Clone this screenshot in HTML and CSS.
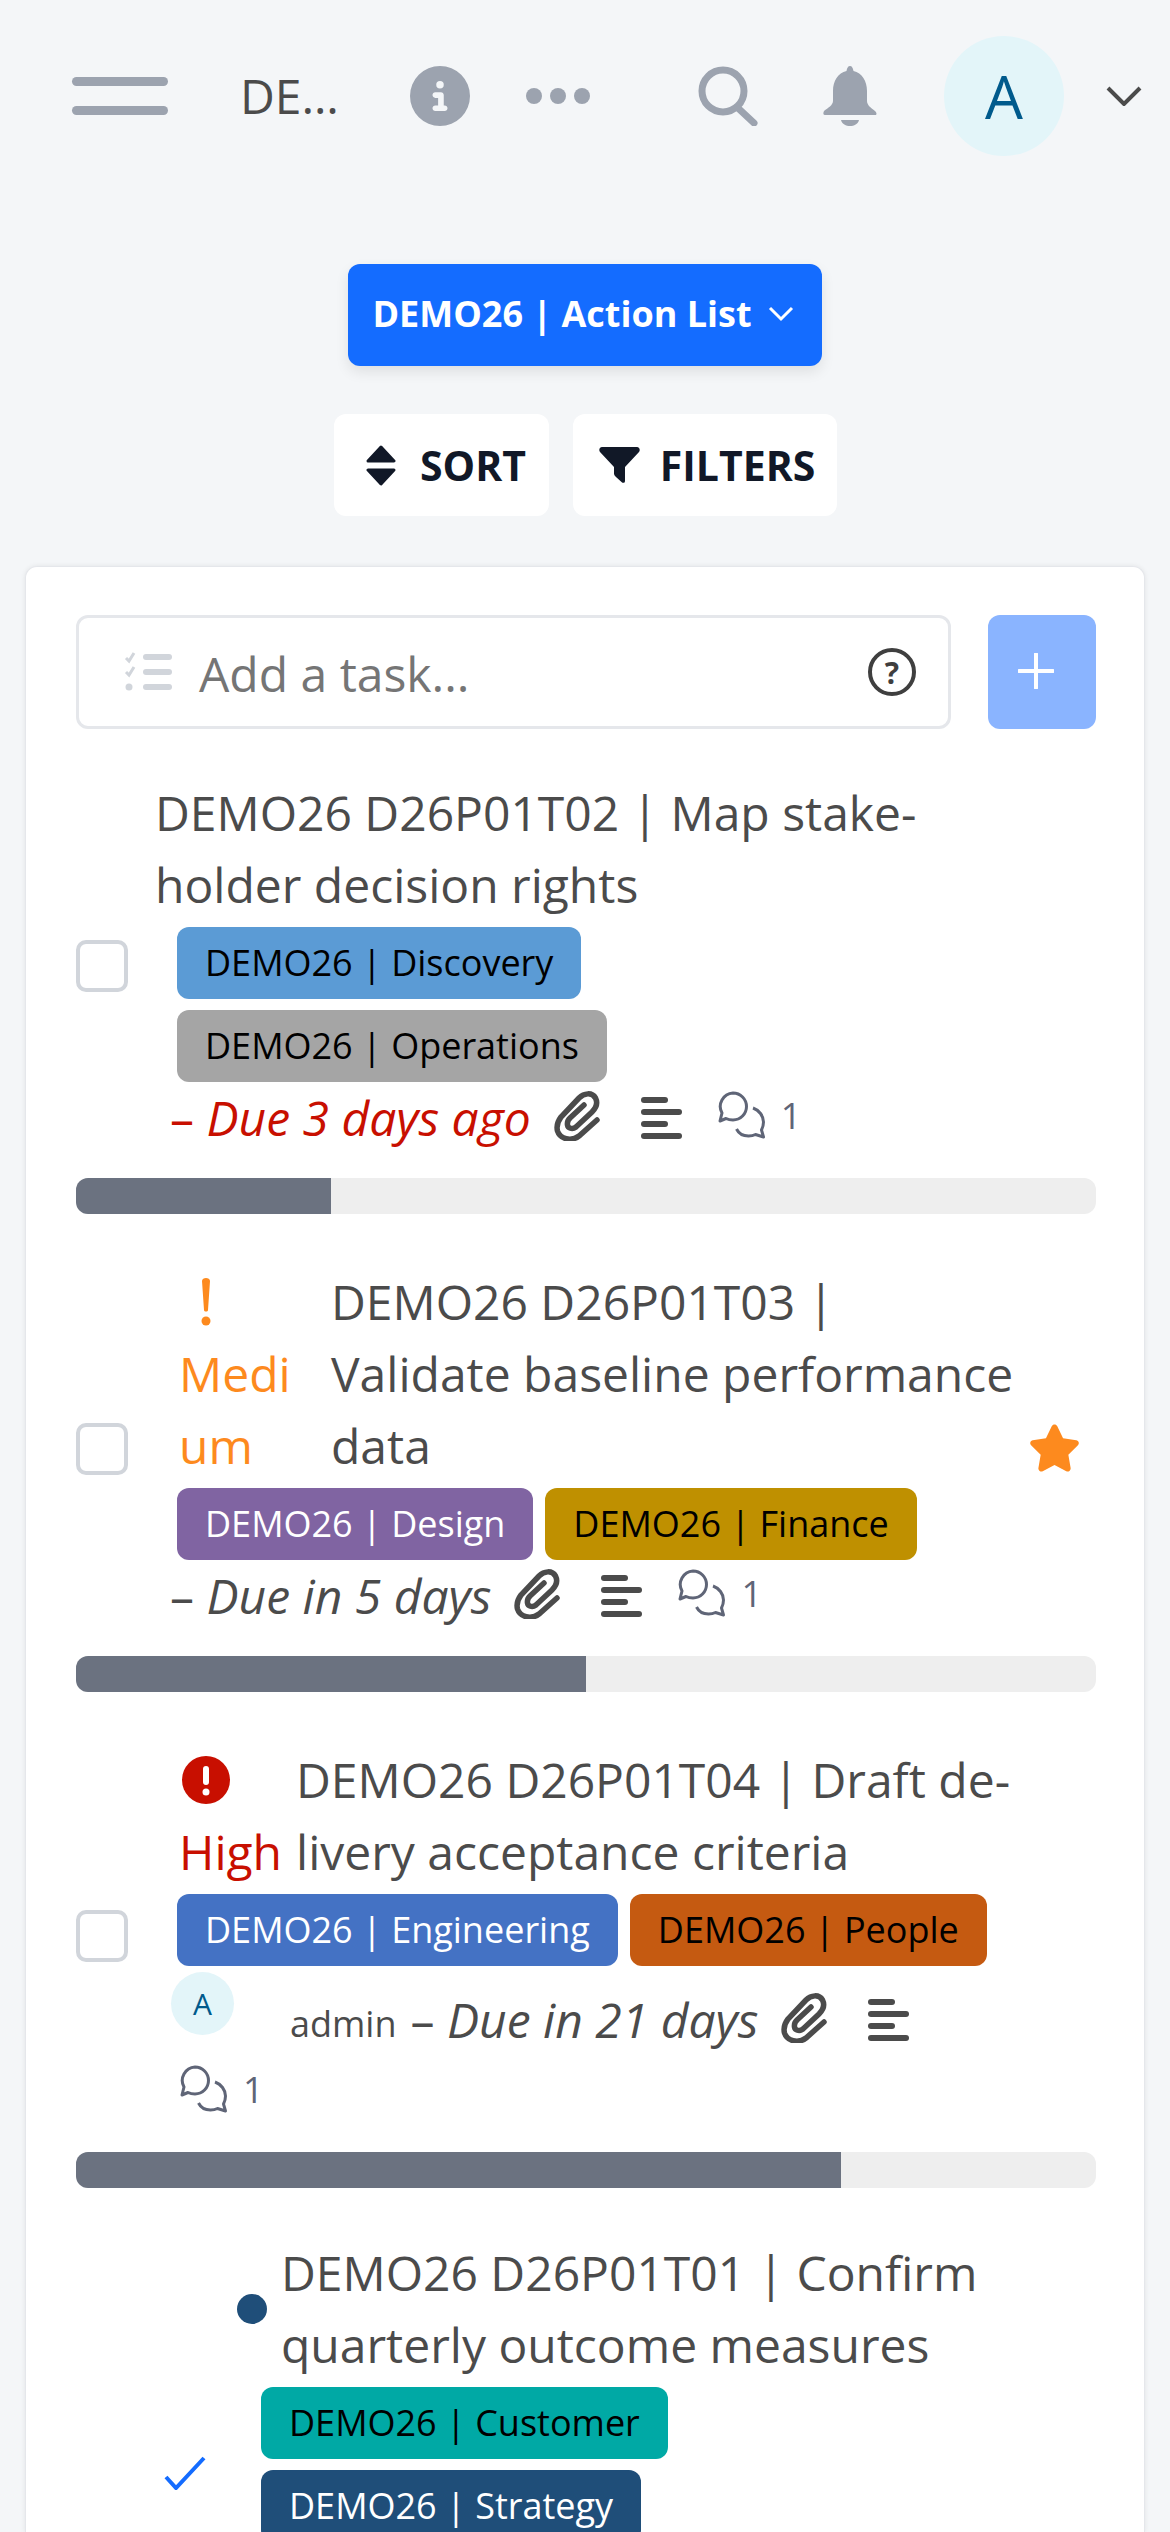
FILE: index.html
```html
<!DOCTYPE html>
<html lang="en">
<head>
    <meta charset="UTF-8">
    <meta name="viewport" content="width=device-width, initial-scale=1.0">
    <title>DEMO26 | Action List</title>
    <link rel="stylesheet" href="styles.css">
</head>
<body>
    <svg class="icon-defs" width="0" height="0">
        <defs>
            <symbol id="clip" viewBox="0 0 46 51">
                <path d="M43 30L25 46C17 52 6 49 3.5 41C2 35 4 31 7 27L25 8C30 3 38 2 41.5 8C44 13 42 18 38 22L22 37C18 40 14 38 13.5 35C13 32 14 30 16 28L30 15" fill="none" stroke="#4b4b4b" stroke-width="5.5" stroke-linecap="round"/>
            </symbol>
            <symbol id="lines" viewBox="0 0 41 42">
                <rect x="0" y="0" width="27" height="6" rx="3"/>
                <rect x="0" y="12" width="41" height="6" rx="3"/>
                <rect x="0" y="24" width="27" height="6" rx="3"/>
                <rect x="0" y="36" width="41" height="6" rx="3"/>
            </symbol>
            <symbol id="comments" viewBox="0 0 48 48">
                <path d="M15 2a13.5 13.5 0 0 1 0 27c-3 0-5-.5-7-1.5L2 30l2-8A13.5 13.5 0 0 1 15 2z" fill="none" stroke="#5f6577" stroke-width="3" stroke-linejoin="round"/>
                <path d="M35 17c6 2 10.5 8 10.5 14 0 3-1 6-2 8l2 7-8-2.5c-2 1-4 1.5-7 1.5-6 0-10-3-12-7" fill="none" stroke="#5f6577" stroke-width="3" stroke-linejoin="round"/>
            </symbol>
        </defs>
    </svg>

    <header class="topbar">
        <div class="hamburger"><span></span><span></span></div>
        <div class="topbar-title">DEMO26 | Action List</div>
        <svg class="icon-info" viewBox="0 0 512 512"><path d="M256 512A256 256 0 1 0 256 0a256 256 0 1 0 0 512zM216 336h24V272H216c-13.3 0-24-10.7-24-24s10.7-24 24-24h48c13.3 0 24 10.7 24 24v88h8c13.3 0 24 10.7 24 24s-10.7 24-24 24H216c-13.3 0-24-10.7-24-24s10.7-24 24-24zm40-208a32 32 0 1 1 0 64 32 32 0 1 1 0-64z"/></svg>
        <div class="dots"><span></span><span></span><span></span></div>
        <svg class="icon-search" viewBox="0 0 60 60"><circle cx="25" cy="25" r="21" fill="none" stroke="#9ca3af" stroke-width="7"/><path d="M41 43L56 57" stroke="#9ca3af" stroke-width="7" stroke-linecap="round"/></svg>
        <svg class="icon-bell" viewBox="0 0 54 60"><path d="M27 0c2 0 3 2 3.5 5C39 7 44 15 44 25v10c0 4 4 7 8 10 2 2 2 4 0 4H2c-2 0-2-2-1-4 4-3 9-6 9-10V25C10 15 15 7 23.5 5 24 2 25 0 27 0z"/><path d="M18 54h18c-1 4-5 6-9 6s-8-2-9-6z"/></svg>
        <div class="avatar">A</div>
        <svg class="icon-chevron" viewBox="0 0 36 20"><path d="M2 2L18 18L34 2" fill="none" stroke="#4b4b4b" stroke-width="4"/></svg>
    </header>

    <div class="list-picker">
        <button class="list-btn">DEMO26 | Action List
            <svg viewBox="0 0 26 16"><path d="M2 2L13 13L24 2" fill="none" stroke="#fff" stroke-width="3"/></svg>
        </button>
    </div>

    <div class="toolbar">
        <button class="tool-btn sort-btn">
            <svg class="icon-sort" viewBox="0 0 30 41"><path d="M15 2L28 16H2z" stroke="#111827" stroke-width="3" stroke-linejoin="round"/><path d="M2 25H28L15 39z" stroke="#111827" stroke-width="3" stroke-linejoin="round"/></svg>
            SORT
        </button>
        <button class="tool-btn filter-btn">
            <svg class="icon-filter" viewBox="0 0 41 36"><path d="M3 0h35c2.500 0 3.500 3 2 5L26 20v14c0 2-2 2.500-3.500 1L17 30c-1-1-2-2-2-3.500V20L1 5C-.5 3 .5 0 3 0z"/></svg>
            FILTERS
        </button>
    </div>

    <main class="card">
        <div class="add-row">
            <div class="add-input">
                <svg class="icon-tasks" viewBox="0 0 50 40">
                    <path d="M3 6l3 3 5-8M3 20l3 3 5-8" fill="none" stroke="#d1d5db" stroke-width="3"/>
                    <circle cx="6" cy="35" r="3.500" fill="#d1d5db"/>
                    <rect x="20" y="2" width="29" height="6" rx="3" fill="#d1d5db"/>
                    <rect x="20" y="17" width="29" height="6" rx="3" fill="#d1d5db"/>
                    <rect x="20" y="32" width="29" height="6" rx="3" fill="#d1d5db"/>
                </svg>
                <span class="add-placeholder">Add a task...</span>
                <span class="help">?</span>
            </div>
            <button class="add-btn"><svg viewBox="0 0 36 36"><path d="M18 1V35M1 18H35" stroke="#fff" stroke-width="4" stroke-linecap="round"/></svg></button>
        </div>

        <!-- task 1 -->
        <div class="task">
            <div class="checkbox"></div>
            <div class="task-body">
                <div class="task-head">
                    <div class="task-title">DEMO26 D26P01T02 | Map stake&shy;holder decision rights</div>
                </div>
                <div class="tags">
                    <span class="tag tag-discovery">DEMO26 | Discovery</span>
                    <span class="tag tag-operations">DEMO26 | Operations</span>
                </div>
                <div class="meta">
                    <span class="due overdue">– <em>Due 3 days ago</em></span>
                    <svg class="icon-clip"><use href="#clip"/></svg>
                    <svg class="icon-lines"><use href="#lines"/></svg>
                    <span class="comment-count"><svg class="icon-comments"><use href="#comments"/></svg>1</span>
                </div>
            </div>
            <div class="star-slot"></div>
        </div>
        <div class="progress"><div class="progress-fill" style="width: 25%"></div></div>

        <!-- task 2 -->
        <div class="task">
            <div class="checkbox"></div>
            <div class="task-body">
                <div class="task-head">
                    <div class="priority priority-medium">
                        <div class="priority-icon">
                            <svg class="icon-bang" viewBox="0 0 10 48"><path d="M1 3c0-4 8-4 8 0L7 32c0 2-4 2-4 0z"/><circle cx="5" cy="43" r="4.500"/></svg>
                        </div>
                        Medium
                    </div>
                    <div class="task-title">DEMO26 D26P01T03 | Validate baseline performance data</div>
                </div>
                <div class="tags">
                    <span class="tag tag-design">DEMO26 | Design</span>
                    <span class="tag tag-finance">DEMO26 | Finance</span>
                </div>
                <div class="meta">
                    <span class="due">– <em>Due in 5 days</em></span>
                    <svg class="icon-clip"><use href="#clip"/></svg>
                    <svg class="icon-lines"><use href="#lines"/></svg>
                    <span class="comment-count"><svg class="icon-comments"><use href="#comments"/></svg>1</span>
                </div>
            </div>
            <div class="star-slot">
                <svg class="icon-star" viewBox="0 0 576 512"><path d="M316.900 18C311.600 7 300.400 0 288.100 0s-23.400 7-28.800 18L195 150.300 51.400 171.500c-12 1.800-22 10.200-25.700 21.700s-.7 24.200 7.900 32.700L137.800 329 113.200 474.700c-2 12 3 24.200 12.900 31.300s23 8 33.800 2.300l128.300-68.500 128.300 68.500c10.800 5.700 23.900 4.900 33.800-2.300s14.900-19.300 12.900-31.300L438.500 329 542.700 225.900c8.600-8.500 11.700-21.200 7.900-32.700s-13.700-19.900-25.700-21.700L381.200 150.300 316.900 18z"/></svg>
            </div>
        </div>
        <div class="progress"><div class="progress-fill" style="width: 50%"></div></div>

        <!-- task 3 -->
        <div class="task">
            <div class="checkbox"></div>
            <div class="task-body">
                <div class="task-head">
                    <div class="priority priority-high">
                        <div class="priority-icon">
                            <svg class="icon-alert" viewBox="0 0 48 48"><circle cx="24" cy="24" r="24"/><rect x="21" y="10" width="6" height="19" rx="3" fill="#fff"/><circle cx="24" cy="36" r="3.500" fill="#fff"/></svg>
                        </div>
                        High
                    </div>
                    <div class="task-title">DEMO26 D26P01T04 | Draft de&shy;livery acceptance criteria</div>
                </div>
                <div class="tags">
                    <span class="tag tag-engineering">DEMO26 | Engineering</span>
                    <span class="tag tag-people">DEMO26 | People</span>
                </div>
                <div class="meta">
                    <span class="avatar avatar-small">A</span>
                    <span class="assignee">admin</span>
                    <span class="due">– <em>Due in 21 days</em></span>
                    <svg class="icon-clip"><use href="#clip"/></svg>
                    <svg class="icon-lines"><use href="#lines"/></svg>
                    <span class="comment-count"><svg class="icon-comments"><use href="#comments"/></svg>1</span>
                </div>
            </div>
            <div class="star-slot"></div>
        </div>
        <div class="progress"><div class="progress-fill" style="width: 75%"></div></div>

        <!-- task 4, done -->
        <div class="task task-done">
            <svg class="icon-check" viewBox="0 0 42 34"><path d="M2 21L12 32L40 2" fill="none" stroke="#146cff" stroke-width="4"/></svg>
            <div class="task-body">
                <div class="task-head">
                    <span class="status-dot"></span>
                    <div class="task-title">DEMO26 D26P01T01 | Confirm quarterly outcome measures</div>
                </div>
                <div class="tags">
                    <span class="tag tag-customer">DEMO26 | Customer</span>
                    <span class="tag tag-strategy">DEMO26 | Strategy</span>
                </div>
            </div>
            <div class="star-slot"></div>
        </div>
    </main>
</body>
</html>
```

FILE: styles.css
```css
html, body {
    height: 2532px;
    overflow: hidden;
}

body {
    margin: 0;
    background-color: #f4f6f8;
    font-family: "Open Sans", "Noto Sans", sans-serif;
    color: #4b4b4b;
}

button {
    font-family: inherit;
    border: none;
    cursor: pointer;
}

.icon-defs {
    position: absolute;
}

/* top bar */
.topbar {
    display: flex;
    align-items: center;
    height: 121px;
    padding: 35px 0 0 72px;
}

.hamburger {
    width: 96px;
    margin-right: 72px;
}

.hamburger span {
    display: block;
    height: 9px;
    border-radius: 5px;
    background-color: #9ca3af;
}

.hamburger span + span {
    margin-top: 20px;
}

.topbar-title {
    width: 99px;
    margin-right: 71px;
    font-size: 48px;
    white-space: nowrap;
    overflow: hidden;
    text-overflow: ellipsis;
}

.icon-info {
    width: 60px;
    height: 60px;
    margin-right: 56px;
    fill: #9ca3af;
}

.dots {
    display: flex;
    gap: 8px;
    margin-right: 108px;
}

.dots span {
    width: 16px;
    height: 16px;
    border-radius: 50%;
    background-color: #9ca3af;
}

.icon-search {
    width: 60px;
    height: 60px;
    margin-right: 65px;
}

.icon-bell {
    width: 54px;
    height: 60px;
    margin-right: 67px;
    fill: #9ca3af;
}

.avatar {
    display: flex;
    align-items: center;
    justify-content: center;
    width: 120px;
    height: 120px;
    margin-right: 42px;
    border-radius: 50%;
    background-color: #e3f5f9;
    color: #005a8c;
    font-size: 60px;
}

.icon-chevron {
    width: 36px;
    height: 20px;
}

/* list picker and toolbar */
.list-picker {
    display: flex;
    justify-content: center;
    margin-top: 108px;
}

.list-btn {
    display: flex;
    align-items: center;
    justify-content: center;
    gap: 16px;
    width: 474px;
    height: 102px;
    padding: 0 4px 3px 0;
    border-radius: 12px;
    background-color: #146cff;
    box-shadow: 0 6px 14px rgba(0, 0, 0, 0.09);
    color: #fff;
    font-size: 36px;
    font-weight: 700;
}

.list-btn svg {
    width: 26px;
    height: 16px;
}

.toolbar {
    display: flex;
    justify-content: center;
    gap: 24px;
    margin-top: 48px;
}

.tool-btn {
    display: flex;
    align-items: center;
    justify-content: center;
    height: 102px;
    border-radius: 12px;
    background-color: #fff;
    color: #111827;
    font-size: 41px;
    font-weight: 700;
}

.sort-btn {
    width: 215px;
    gap: 24px;
    padding: 0 0 0 10px;
}

.filter-btn {
    width: 264px;
    gap: 20px;
    padding: 0 0 0 5px;
}

.icon-sort {
    width: 30px;
    height: 41px;
    fill: #111827;
}

.icon-filter {
    width: 41px;
    height: 36px;
    fill: #111827;
}

/* card, runs on below the fold */
.card {
    box-sizing: border-box;
    height: 1966px;
    margin: 50px 25px 0 25px;
    padding: 48px 48px 0 50px;
    border: 1px solid #e5e7eb;
    border-bottom: none;
    border-radius: 12px 12px 0 0;
    background-color: #fff;
    box-shadow: 0 0 5px rgba(0, 0, 0, 0.08);
    overflow: hidden;
}

.add-row {
    display: flex;
    gap: 37px;
    margin-bottom: 48px;
}

.add-input {
    display: flex;
    align-items: center;
    flex: 1;
    height: 114px;
    box-sizing: border-box;
    padding: 0 32px 0 44px;
    border: 3px solid #e5e7eb;
    border-radius: 12px;
}

.icon-tasks {
    width: 50px;
    height: 40px;
    margin-right: 26px;
}

.add-placeholder {
    flex: 1;
    padding-top: 3px;
    color: #757575;
    font-size: 48px;
}

.help {
    display: flex;
    align-items: center;
    justify-content: center;
    box-sizing: border-box;
    width: 48px;
    height: 48px;
    border: 4px solid #3f3f3f;
    border-radius: 50%;
    color: #3f3f3f;
    font-size: 30px;
    font-weight: 700;
}

.add-btn {
    display: flex;
    align-items: center;
    justify-content: center;
    width: 108px;
    height: 114px;
    padding: 0 12px 2px 0;
    border-radius: 12px;
    background-color: #8ab4ff;
}

.add-btn svg {
    width: 36px;
    height: 36px;
}

/* tasks */
.task {
    display: flex;
    align-items: center;
}

.checkbox {
    flex: none;
    box-sizing: border-box;
    width: 52px;
    height: 52px;
    margin-right: 27px;
    border: 4px solid #d1d5db;
    border-radius: 10px;
}

.task-body {
    flex: 1;
    min-width: 0;
}

.star-slot {
    flex: none;
    width: 53px;
    margin: 0 15px 0 8px;
}

.icon-star {
    display: block;
    width: 53px;
    height: 50px;
    margin-top: -3px;
    fill: #fd8a1e;
}

.task-head {
    display: flex;
    align-items: center;
    margin-bottom: 6px;
}

.task-title {
    flex: 1;
    font-size: 48px;
    line-height: 72px;
    hyphens: manual;
}

.priority {
    flex: none;
    align-self: flex-start;
    margin-left: 24px;
    font-size: 48px;
    line-height: 72px;
}

.priority-medium {
    width: 125px;
    margin-right: 27px;
    color: #fd8a1e;
    overflow-wrap: anywhere;
}

.priority-high {
    margin-right: 14px;
    color: #c80f00;
}

.priority-icon {
    display: flex;
    align-items: center;
    justify-content: center;
    width: 54px;
    height: 72px;
}

.icon-bang {
    width: 10px;
    height: 48px;
    fill: #fd8a1e;
}

.icon-alert {
    width: 48px;
    height: 48px;
    fill: #c80f00;
}

.tags {
    display: flex;
    flex-wrap: wrap;
    gap: 11px 12px;
    padding-left: 22px;
}

.tag {
    height: 72px;
    padding: 0 28px;
    border-radius: 12px;
    color: #000;
    font-size: 36px;
    line-height: 72px;
    white-space: nowrap;
}

.tag-discovery { background-color: #5b9bd5; }
.tag-operations { background-color: #a5a5a5; }
.tag-design { background-color: #8064a2; color: #fff; }
.tag-finance { background-color: #bf9000; }
.tag-engineering { background-color: #4472c4; color: #fff; }
.tag-people { background-color: #c55a11; }
.tag-customer { background-color: #00a9a5; }
.tag-strategy { background-color: #1f4e79; color: #fff; }

.meta {
    display: flex;
    flex-wrap: wrap;
    align-items: flex-end;
    padding-left: 15px;
}

.due {
    height: 72px;
    font-size: 48px;
    line-height: 72px;
}

.overdue {
    color: #c80f00;
}

.icon-clip {
    width: 46px;
    height: 51px;
    margin: 0 0 13px 23px;
}

.icon-lines {
    width: 41px;
    height: 42px;
    margin: 0 26px 15px 41px;
    fill: #4b4b4b;
}

.comment-count {
    display: flex;
    align-items: center;
    gap: 15px;
    height: 72px;
    margin-left: 10px;
    padding-bottom: 6px;
    box-sizing: border-box;
    color: #5f6577;
    font-size: 36px;
}

.icon-comments {
    width: 48px;
    height: 48px;
}

.avatar-small {
    align-self: flex-start;
    width: 63px;
    height: 63px;
    margin: 6px 0 21px 1px;
    font-size: 30px;
}

.assignee {
    height: 68px;
    margin: 0 14px 0 56px;
    font-size: 36px;
    line-height: 72px;
}

.progress {
    height: 36px;
    margin: 24px 0 52px;
    border-radius: 12px;
    background-color: #eeeeee;
    overflow: hidden;
}

.progress-fill {
    height: 100%;
    background-color: #6b7280;
}

/* done task */
.task-done {
    margin-top: -3px;
}

.icon-check {
    flex: none;
    width: 42px;
    height: 34px;
    margin: 0 31px 0 88px;
}

.task-done .task-body {
    min-height: 472px;
    align-self: flex-start;
}

.task-done .tags {
    padding-left: 24px;
}

.status-dot {
    flex: none;
    width: 30px;
    height: 30px;
    margin-right: 14px;
    border-radius: 50%;
    background-color: #1f4e79;
}
```
